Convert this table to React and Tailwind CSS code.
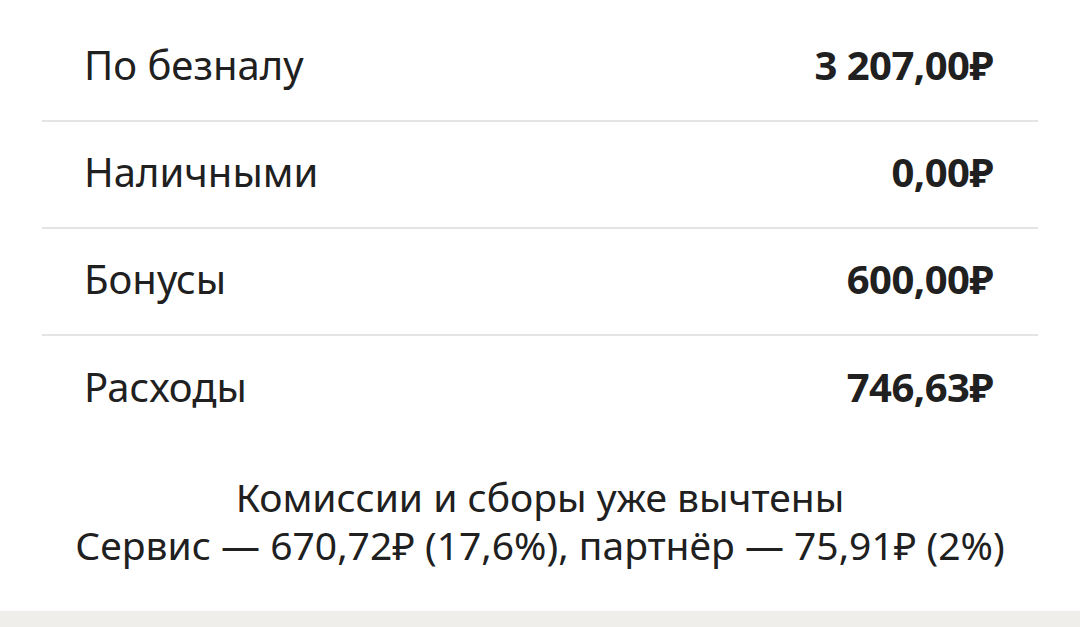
import React from 'react';

const rows = [
  { label: 'По безналу', value: '3 207,00₽' },
  { label: 'Наличными', value: '0,00₽' },
  { label: 'Бонусы', value: '600,00₽' },
  { label: 'Расходы', value: '746,63₽' },
];

export default function App() {
  return (
    <div className="w-[1080px] h-[627px] bg-white overflow-hidden flex flex-col text-[#202020] font-['Noto_Sans',sans-serif]">
      <div className="px-[42px] pt-[15px]">
        {rows.map((r, i) => (
          <div
            key={r.label}
            className={`h-[107px] pb-[6px] flex items-center justify-between pl-[42px] pr-[45px] ${i < rows.length - 1 ? 'border-b-2 border-[#e4e4e2]' : ''}`}
          >
            <span className="text-[40px] leading-none">{r.label}</span>
            <span className="text-[40px] leading-none font-bold tracking-[-0.5px]">{r.value}</span>
          </div>
        ))}
      </div>

      <div className="mt-[30px] text-center text-[39px] leading-[48px]">
        <p>Комиссии и сборы уже вычтены</p>
        <p>Сервис — 670,72₽ (17,6%), партнёр — 75,91₽ (2%)</p>
      </div>

      <div className="mt-auto h-[16px] bg-[#efeeea]" />
    </div>
  );
}
